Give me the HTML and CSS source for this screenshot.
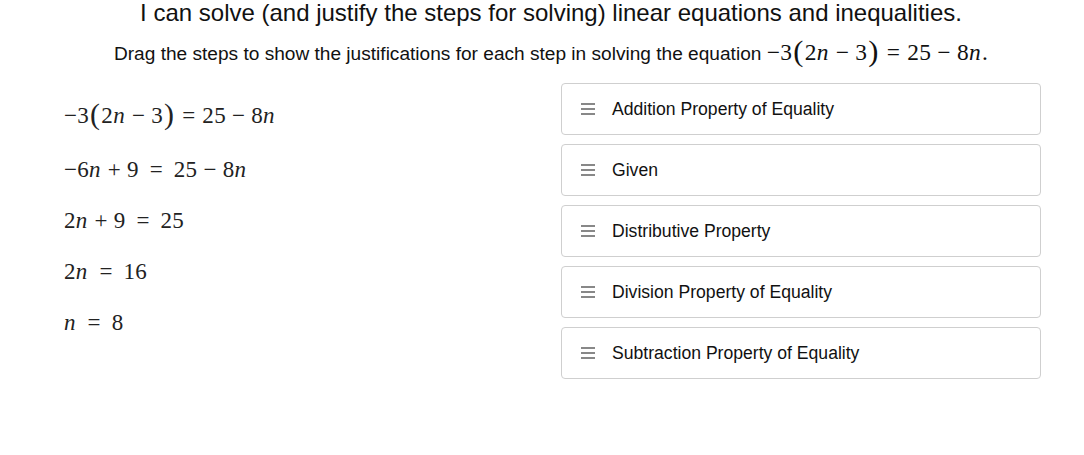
FILE: index.html
```html
<!DOCTYPE html>
<html>
<head>
<meta charset="utf-8">
<link rel="stylesheet" href="styles.css">
</head>
<body>
<div class="page">
  <h1 class="title">I can solve (and justify the steps for solving) linear equations and inequalities.</h1>
  <p class="prompt">Drag the steps to show the justifications for each step in solving the equation <span class="m">−3<span class="paren">(</span>2<i>n</i><span class="bin">−</span>3<span class="paren">)</span><span class="rel">=</span>25<span class="bin">−</span>8<i>n</i>.</span></p>
  <div class="work">
    <div class="steps">
      <div class="step first m">−3<span class="paren">(</span>2<i>n</i><span class="bin">−</span>3<span class="paren">)</span><span class="rel">=</span>25<span class="bin">−</span>8<i>n</i></div>
      <div class="step m">−6<i>n</i><span class="bin">+</span>9<span class="rel wide">=</span>25<span class="bin">−</span>8<i>n</i></div>
      <div class="step m">2<i>n</i><span class="bin">+</span>9<span class="rel wide">=</span>25</div>
      <div class="step m">2<i>n</i><span class="rel wide">=</span>16</div>
      <div class="step m"><i>n</i><span class="rel wide">=</span>8</div>
    </div>
    <div class="cards">
      <div class="card"><span class="grip"><span></span><span></span><span></span></span><span class="label">Addition Property of Equality</span></div>
      <div class="card"><span class="grip"><span></span><span></span><span></span></span><span class="label">Given</span></div>
      <div class="card"><span class="grip"><span></span><span></span><span></span></span><span class="label">Distributive Property</span></div>
      <div class="card"><span class="grip"><span></span><span></span><span></span></span><span class="label">Division Property of Equality</span></div>
      <div class="card"><span class="grip"><span></span><span></span><span></span></span><span class="label">Subtraction Property of Equality</span></div>
    </div>
  </div>
</div>
</body>
</html>
```
FILE: styles.css
```css
html, body {
  margin: 0;
  padding: 0;
  background: #fff;
}
.page {
  font-family: Arial, "Liberation Sans", sans-serif;
  color: #111;
  padding: 0 43px 0 61px;
}
.title {
  margin: 0;
  font-weight: normal;
  font-size: 24px;
  line-height: 26px;
  text-align: center;
}
.prompt {
  margin: 15px 0 0;
  font-size: 19.1px;
  line-height: 26px;
  height: 26px;
  text-align: center;
}
.m {
  font-family: "Liberation Serif", "Times New Roman", serif;
  font-size: 23px;
  letter-spacing: 0.3px;
}
.prompt .m {
  font-size: 23.4px;
  line-height: 0;
}
.m i {
  font-style: italic;
  margin-right: 1px;
}
.bin {
  padding: 0 0.26em;
}
.rel {
  padding: 0 0.3em;
}
.rel.wide {
  padding: 0 0.47em;
}
.paren {
  font-size: 1.3em;
  line-height: 0;
  position: relative;
  top: 1px;
  padding: 0 1px;
}
.work {
  display: flex;
  margin-top: 16px;
}
.steps {
  width: 500px;
  display: flex;
  flex-direction: column;
  padding-top: 21px;
}
.step {
  height: 51px;
  line-height: 24px;
  color: #222;
  margin-left: 3px;
}
.step.first {
  height: 54px;
}
.cards {
  flex: 1;
  display: flex;
  flex-direction: column;
  gap: 9px;
}
.card {
  height: 50px;
  border: 1px solid #cfcfcf;
  border-radius: 4px;
  display: flex;
  align-items: center;
  padding-left: 19px;
}
.grip {
  display: flex;
  flex-direction: column;
  gap: 3px;
  width: 14px;
  margin-right: 17px;
}
.grip span {
  display: block;
  height: 2px;
  background: #888;
}
.label {
  font-size: 17.6px;
  color: #111;
}
```
